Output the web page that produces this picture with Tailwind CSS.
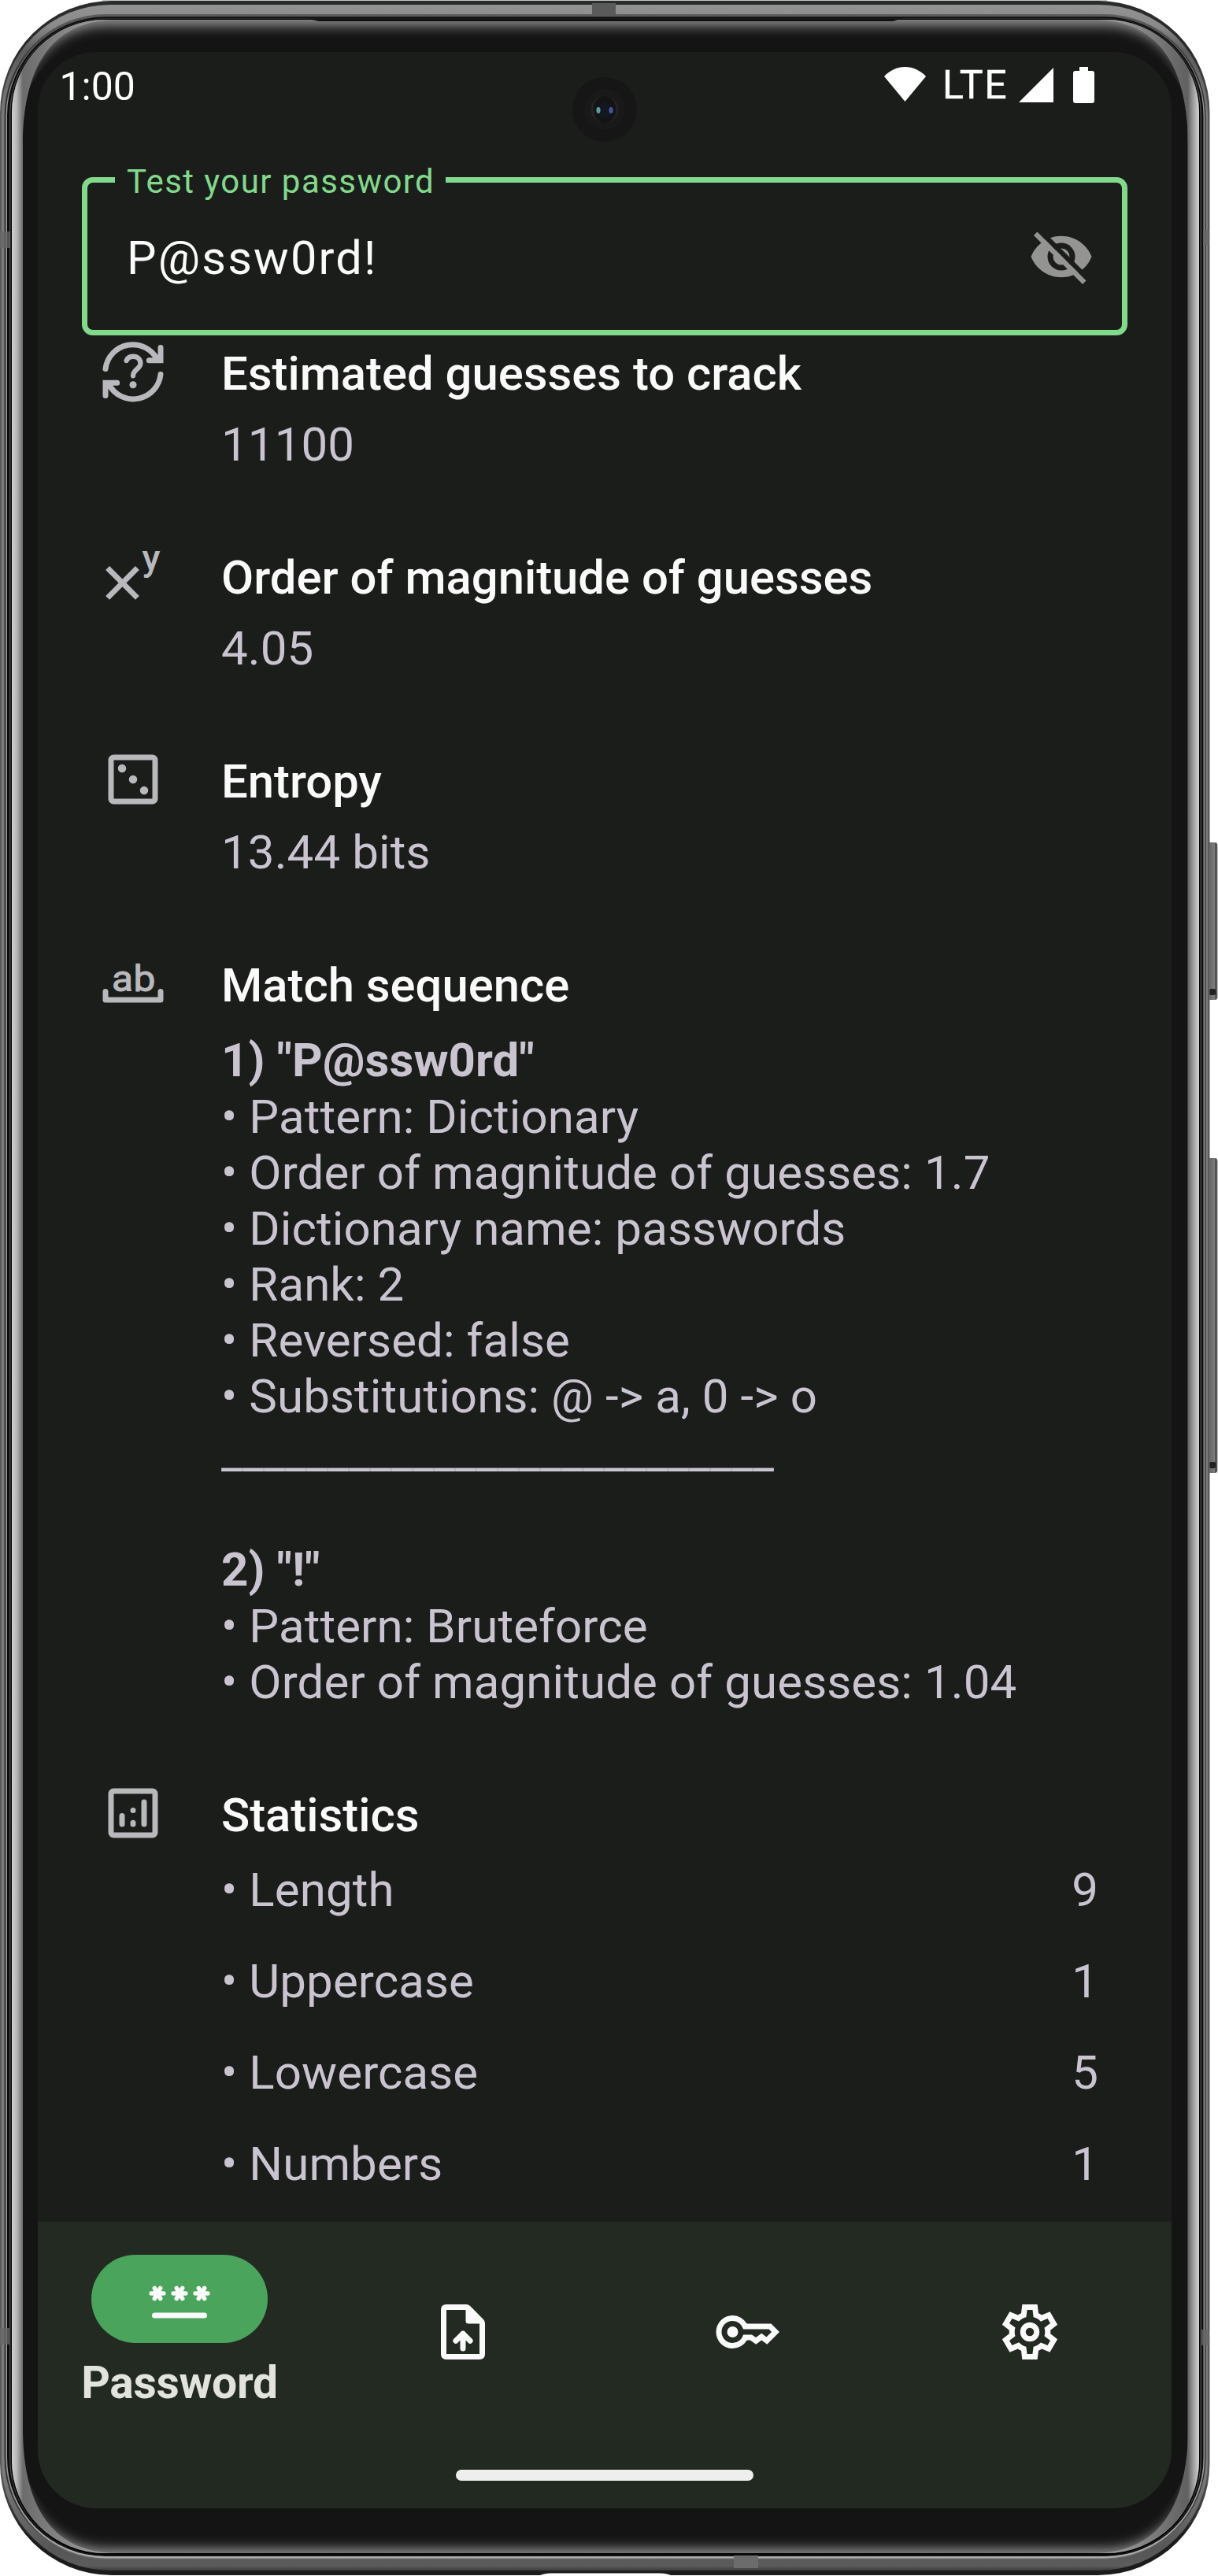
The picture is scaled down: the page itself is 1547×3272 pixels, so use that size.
<!DOCTYPE html>
<html lang="en">
<head>
<meta charset="utf-8">
<title>Password strength</title>
<script src="https://cdn.jsdelivr.net/npm/@tailwindcss/browser@4"></script>
</head>
<body class="bg-white font-[Roboto,sans-serif]">
<div class="relative h-[3272px] w-[1547px] overflow-hidden">

  <!-- Device body -->
  <svg class="absolute inset-0" width="1547" height="3272" viewBox="0 0 1547 3272" fill="none">
    <defs>
      <linearGradient id="g0" x1="0" y1="0" x2="0" y2="3272" gradientUnits="userSpaceOnUse"><stop offset="0" stop-color="#2a2c2b"/><stop offset=".02" stop-color="#2a2c2b"/><stop offset=".045" stop-color="#5a5a5a"/><stop offset=".96" stop-color="#5a5a5a"/><stop offset=".985" stop-color="#1c1c1c"/><stop offset="1" stop-color="#1c1c1c"/></linearGradient>
      <linearGradient id="g1" x1="0" y1="0" x2="0" y2="3272" gradientUnits="userSpaceOnUse"><stop offset="0" stop-color="#949494"/><stop offset=".01" stop-color="#8a8a8a"/><stop offset=".02" stop-color="#5c5c5c"/><stop offset=".045" stop-color="#7c7c7c"/><stop offset=".96" stop-color="#7c7c7c"/><stop offset=".99" stop-color="#565656"/><stop offset=".996" stop-color="#5c5c5c"/><stop offset=".999" stop-color="#2a2a2a"/></linearGradient>
      <linearGradient id="g2" x1="0" y1="0" x2="0" y2="3272" gradientUnits="userSpaceOnUse"><stop offset="0" stop-color="#666"/><stop offset=".03" stop-color="#333"/><stop offset=".97" stop-color="#333"/><stop offset="1" stop-color="#777"/></linearGradient>
      <linearGradient id="g3" x1="0" y1="0" x2="0" y2="3272" gradientUnits="userSpaceOnUse"><stop offset="0" stop-color="#333"/><stop offset=".01" stop-color="#555"/><stop offset=".04" stop-color="#9a9a9a"/><stop offset=".97" stop-color="#9a9a9a"/><stop offset="1" stop-color="#b4b4b4"/></linearGradient>
      <linearGradient id="g5" x1="0" y1="0" x2="0" y2="3272" gradientUnits="userSpaceOnUse"><stop offset="0" stop-color="#1a1a1a"/><stop offset=".04" stop-color="#4a4a4a"/><stop offset=".96" stop-color="#4a4a4a"/><stop offset="1" stop-color="#222"/></linearGradient>
      <linearGradient id="rim" x1="15" y1="0" x2="1523" y2="0" gradientUnits="userSpaceOnUse"><stop offset="0" stop-color="#d0d0d0"/><stop offset=".004" stop-color="#b8b8b8"/><stop offset=".0093" stop-color="#6c6c6c"/><stop offset=".07" stop-color="#9a9a9a"/><stop offset=".93" stop-color="#9a9a9a"/><stop offset=".9903" stop-color="#606060"/><stop offset=".996" stop-color="#a8a8a8"/><stop offset="1" stop-color="#d4d4d4"/></linearGradient>
      <linearGradient id="btn" x1="1533" y1="0" x2="1547" y2="0" gradientUnits="userSpaceOnUse"><stop offset="0" stop-color="#4a4a4a"/><stop offset=".15" stop-color="#a0a0a0"/><stop offset=".3" stop-color="#6a6a6a"/><stop offset=".7" stop-color="#7c7c7c"/><stop offset=".82" stop-color="#3a3a3a"/><stop offset="1" stop-color="#a0a0a0"/></linearGradient>
      <clipPath id="glass"><rect x="15" y="25" width="1508" height="3218" rx="118"/></clipPath>
      <filter id="soft" x="-10%" y="-10%" width="120%" height="120%"><feGaussianBlur stdDeviation="8"/></filter>
    </defs>
    <rect x="1533" y="1070" width="13.5" height="200" rx="4" fill="url(#btn)"/>
    <rect x="1536" y="1256" width="8" height="8" rx="2" fill="#222"/>
    <rect x="1533" y="1471" width="13.5" height="400" rx="4" fill="url(#btn)"/>
    <rect x="1536" y="1857" width="8" height="8" rx="2" fill="#222"/>
    <rect x="130" y="0" width="1276" height="4" fill="#c4c8c5"/>
    <rect x="0" y="1" width="1536.500" height="3270" rx="142" fill="url(#g0)"/>
    <rect x="2" y="6" width="1532" height="3259" rx="138" fill="url(#g1)"/>
    <rect x="5.500" y="18" width="1526" height="3233" rx="129" fill="url(#g2)"/>
    <rect x="7.500" y="20.500" width="1522.500" height="3229" rx="127" fill="url(#g3)"/>
    <rect x="9" y="21.500" width="1519.500" height="3225.500" rx="125" fill="#0d0d0d"/>
    <rect x="12" y="23" width="1514" height="3223" rx="122" fill="url(#g5)"/>
    <rect x="13.500" y="24" width="1511" height="3221.500" rx="120" fill="#030303"/>
    <rect x="15" y="25" width="1508" height="3218" rx="118" fill="#141414"/>
    <g clip-path="url(#glass)">
      <rect x="16" y="22" width="1506" height="3226" rx="118" stroke="#9a9a9a" stroke-width="20" filter="url(#soft)"/>
      <rect x="29" y="60" width="1479" height="3145" rx="90" fill="#141414"/>
      <path fill="url(#rim)" fill-rule="evenodd" d="M15 25H1523V3243H15ZM29 185V3083C29 3175 60 3243 150 3243H1388C1478 3243 1509 3175 1509 3083V185C1509 93 1478 25 1388 25H150C60 25 29 93 29 185Z"/>
    </g>
    <path d="M390 23.500H1146L1134 27H405Z" fill="#111"/>
    <rect x="752" y="4" width="30" height="17" fill="#5a5a5a"/>
    <rect x="932" y="3246" width="31" height="16" fill="#6c6c6c"/>
    <rect x="0" y="294" width="13" height="21" fill="#666" opacity=".8"/>
    <rect x="0" y="2957" width="12" height="21" fill="#666" opacity=".8"/>
    <rect x="1528" y="292" width="8" height="20" fill="#666" opacity=".8"/>
    <rect x="1526" y="2959" width="10" height="20" fill="#666" opacity=".8"/>
    <path d="M684 3272Q690 3268.500 700 3268.500H838Q848 3268.500 854 3272Z" fill="#fff"/>
  </svg>

  <!-- Screen -->
  <div class="relative ml-[48px] mt-[66px] flex h-[3120px] w-[1440px] flex-col overflow-hidden rounded-[74px] bg-[#1b1d1a]">

    <!-- Front camera -->
    <svg class="absolute left-[679px] top-[32px]" width="82" height="82" viewBox="0 0 82 82">
      <circle cx="41" cy="41" r="41" fill="#161616"/>
      <circle cx="41" cy="41" r="26" fill="#191919"/>
      <circle cx="41" cy="41" r="17.500" fill="#242424"/>
      <ellipse cx="41" cy="41" rx="14.500" ry="17.500" fill="#141414"/>
      <circle cx="41" cy="42" r="10" fill="#131720"/>
      <ellipse cx="33" cy="42" rx="2.600" ry="4" fill="#5f9c9c"/>
      <ellipse cx="49" cy="42" rx="2.600" ry="4" fill="#4656a4"/>
    </svg>

    <!-- Status bar -->
    <div class="flex h-[159px] shrink-0 items-start justify-between pl-[27.500px] pr-[98px] text-white">
      <div class="mt-[14px] text-[50px] leading-[60px]">1:00</div>
      <div class="flex items-start">
        <svg class="mt-[19px]" width="53" height="44" viewBox="0 0 53 44"><path d="M26.500 0C16.500 0 7 4.500 0 12L26.500 44L53 12C46 4.500 36.500 0 26.500 0Z" fill="#fff"/></svg>
        <div class="ml-[21px] mt-[12px] w-[97px] text-[50px] leading-[60px] tracking-[1.600px] [-webkit-text-stroke:.5px_white]">LTE</div>
        <svg class="mt-[20px]" width="44" height="44" viewBox="0 0 44 44"><path d="M44 0V44H0Z" fill="#fff"/></svg>
        <svg class="ml-[25px] mt-[19px]" width="27" height="46" viewBox="0 0 27 46"><path d="M8 0H19V5H24Q27 5 27 8V43Q27 46 24 46H3Q0 46 0 43V8Q0 5 3 5H8Z" fill="#fff"/></svg>
      </div>
    </div>

    <!-- Password field -->
    <div class="relative mx-[56px] flex h-[201px] shrink-0 items-center justify-between rounded-[14px] border-[7px] border-[#82d98c] pl-[50px] pr-[35px]">
      <div class="absolute left-[35px] top-[-26px] w-[420px] bg-[#1b1d1a] pl-[15px] text-[42px] leading-[50px] tracking-[1.440px] whitespace-nowrap text-[#82d98c]">Test your password</div>
      <div class="mt-[5px] text-[59.500px] leading-[70px] tracking-[2.170px] text-[#fafafa]">P@ssw0rd!</div>
      <svg width="84" height="84" viewBox="0 0 24 24" fill="#949492">
        <defs><mask id="eye"><rect width="24" height="24" fill="#fff"/><circle cx="12" cy="12" r="5" fill="#000"/><circle cx="12" cy="12" r="3" fill="#fff"/><path d="M2.460 2.190L22 21.730L24.540 21.730L2.810 0Z" fill="#000"/></mask></defs>
        <path mask="url(#eye)" d="M12 4.500C7 4.500 2.730 7.610 1 12c1.730 4.390 6 7.500 11 7.500s9.270-3.110 11-7.500c-1.730-4.390-6-7.500-11-7.500z"/>
        <path d="M3.270 3L2 4.270L19.730 22L21 20.730Z"/>
      </svg>
    </div>

    <!-- Results -->
    <main class="mt-[4px] flex min-h-0 flex-1 flex-col gap-[89px] overflow-hidden pl-[79px] pr-[93px] text-[60px] leading-[71px] tracking-[.1px] text-[#cac4d0]">
      <section class="flex shrink-0 gap-[70px]">
        <svg class="size-[84px] shrink-0" viewBox="0 0 24 24" fill="none" stroke="#b9b8bd" stroke-width="2" stroke-linecap="round">
          <path d="M2 11A10 10 0 0 1 20.800 7.600M22 3.300V7.900H17.800M22 13A10 10 0 0 1 3.300 16.800M2 20.700V16.100H6.200"/>
          <path stroke-width="1.800" d="M9.600 8C10 7.100 10.900 6.500 12 6.500C13.500 6.500 14.700 7.500 14.700 9C14.700 11 12 11.300 12 13.500"/>
          <circle cx="12" cy="16.800" r="1.300" fill="#b9b8bd" stroke="none"/>
        </svg>
        <div class="flex-1 pt-[10px]">
          <h2 class="mb-[19px] text-[59.800px] font-medium leading-[70px] tracking-normal text-[#fafafa]">Estimated guesses to crack</h2>
          <p>11100</p>
        </div>
      </section>

      <section class="flex shrink-0 gap-[70px]">
        <svg class="size-[84px] shrink-0 overflow-visible" viewBox="0 0 24 24" fill="none" stroke="#b9b8bd" stroke-width="2">
          <path d="M2.750 9.300L13.550 20.100M13.550 9.300L2.750 20.100"/>
          <text x="15.300" y="10.200" font-family="Roboto" font-weight="500" font-size="13.400" fill="#b9b8bd" stroke="none">y</text>
        </svg>
        <div class="flex-1 pt-[10px]">
          <h2 class="mb-[19px] text-[59.800px] font-medium leading-[70px] tracking-normal text-[#fafafa]">Order of magnitude of guesses</h2>
          <p>4.05</p>
        </div>
      </section>

      <section class="flex shrink-0 gap-[70px]">
        <svg class="size-[84px] shrink-0" viewBox="0 0 24 24" fill="#b9b8bd">
          <rect x="4" y="4" width="16" height="16" rx="1" fill="none" stroke="#b9b8bd" stroke-width="2"/>
          <circle cx="8" cy="8" r="1.500"/><circle cx="12" cy="12" r="1.500"/><circle cx="16" cy="16" r="1.500"/>
        </svg>
        <div class="flex-1 pt-[10px]">
          <h2 class="mb-[19px] text-[59.800px] font-medium leading-[70px] tracking-normal text-[#fafafa]">Entropy</h2>
          <p>13.44 bits</p>
        </div>
      </section>

      <section class="flex shrink-0 gap-[70px]">
        <svg class="size-[84px] shrink-0 overflow-visible" viewBox="0 0 24 24" fill="none" stroke="#b9b8bd" stroke-width="2" stroke-linecap="round" stroke-linejoin="round">
          <path d="M2 15V18H22V15"/>
          <text x="4.300" y="14.900" textLength="15.900" lengthAdjust="spacingAndGlyphs" font-family="Roboto" font-size="13.200" fill="#b9b8bd" stroke="#b9b8bd" stroke-width=".3">ab</text>
        </svg>
        <div class="flex-1 pt-[10px]">
          <h2 class="mb-[24px] text-[59.800px] font-medium leading-[70px] tracking-normal text-[#fafafa]">Match sequence</h2>
          <p class="font-bold leading-[72px]">1) "P@ssw0rd"</p>
          <p>• Pattern: Dictionary</p>
          <p>• Order of magnitude of guesses: 1.7</p>
          <p>• Dictionary name: passwords</p>
          <p>• Rank: 2</p>
          <p>• Reversed: false</p>
          <p>• Substitutions: @ -&gt; a, 0 -&gt; o</p>
          <p class="mb-[78px] text-[59.850px] tracking-normal">__________________________</p>
          <p class="font-bold leading-[72px]">2) "!"</p>
          <p>• Pattern: Bruteforce</p>
          <p>• Order of magnitude of guesses: 1.04</p>
        </div>
      </section>

      <section class="flex shrink-0 gap-[70px]">
        <svg class="size-[84px] shrink-0" viewBox="0 0 24 24" fill="none" stroke="#b9b8bd" stroke-width="2" stroke-linecap="round">
          <rect x="4" y="4" width="16" height="16" rx="1"/>
          <path d="M8 13V16M12 15.500V16M16 8V16"/>
          <circle cx="12" cy="11" r="1" fill="#b9b8bd" stroke="none"/>
        </svg>
        <div class="flex-1 pt-[10px]">
          <h2 class="mb-[24px] text-[59.800px] font-medium leading-[70px] tracking-normal text-[#fafafa]">Statistics</h2>
          <div class="flex h-[116px] justify-between"><span>• Length</span><span>9</span></div>
          <div class="flex h-[116px] justify-between"><span>• Uppercase</span><span>1</span></div>
          <div class="flex h-[116px] justify-between"><span>• Lowercase</span><span>5</span></div>
          <div class="flex h-[116px] justify-between"><span>• Numbers</span><span>1</span></div>
        </div>
      </section>
    </main>

    <!-- Bottom navigation -->
    <nav class="relative grid h-[280px] shrink-0 grid-cols-4 bg-[#222a22] text-[#fafafa]">
      <div class="flex flex-col items-center pt-[42px]">
        <div class="flex h-[112px] w-[224px] items-center justify-center rounded-full bg-[#4aa45c]">
          <svg class="size-[84px]" viewBox="0 0 24 24" fill="none" stroke="currentColor" stroke-width="1.600" stroke-linecap="round">
            <path stroke-width="2" d="M3 18H21"/>
            <path d="M1.750 10H6.250M2.950 8.100L5.050 11.900M5.050 8.100L2.950 11.900M9.750 10H14.250M10.950 8.100L13.050 11.900M13.050 8.100L10.950 11.900M17.750 10H22.250M18.950 8.100L21.050 11.900M21.050 8.100L18.950 11.900"/>
          </svg>
        </div>
        <div class="mt-[17px] text-[57px] font-bold leading-[67px] tracking-[-.3px] text-[#e2e3dd]">Password</div>
      </div>
      <div class="flex justify-center pt-[98px]">
        <svg class="size-[84px]" viewBox="0 0 24 24" fill="none" stroke="currentColor" stroke-width="2">
          <path fill="currentColor" stroke="none" fill-rule="evenodd" d="M6 2H13.200Q14 2 14.600 2.600L19.400 7.400Q20 8 20 8.800V20Q20 22 18 22H6Q4 22 4 20V4Q4 2 6 2ZM6 4V20H18V9H14Q13 9 13 8V4Z"/>
          <path stroke-linecap="round" stroke-linejoin="round" d="M12 12.600V18M9.400 15.200L12 12.600L14.600 15.200"/>
        </svg>
      </div>
      <div class="flex justify-center pt-[98px]">
        <svg class="size-[84px]" viewBox="0 -960 960 960" fill="currentColor"><path d="M280-400q-33 0-56.500-23.500T200-480q0-33 23.500-56.500T280-560q33 0 56.500 23.500T360-480q0 33-23.500 56.500T280-400Zm0 160q-100 0-170-70T40-480q0-100 70-170t170-70q67 0 121.500 33t86.500 87h352l120 120-180 180-80-60-80 60-85-60h-47q-32 54-86.500 87T280-240Zm0-80q56 0 98.500-34t56.500-86h125l58 41 82-61 71 55 75-75-40-40H435q-14-52-56.500-86T280-640q-66 0-113 47t-47 113q0 66 47 113t113 47Z"/></svg>
      </div>
      <div class="flex justify-center pt-[98px]">
        <svg class="size-[84px]" viewBox="0 -960 960 960" fill="currentColor"><path d="m370-80-16-128q-13-5-24.500-12T307-235l-119 50L78-375l103-78q-1-7-1-13.500v-27q0-6.500 1-13.500L78-585l110-190 119 50q11-8 23-15t24-12l16-128h220l16 128q13 5 24.500 12t22.500 15l119-50 110 190-103 78q1 7 1 13.500v27q0 6.500-2 13.500l103 78-110 190-118-50q-11 8-23 15t-24 12L590-80H370Zm70-80h79l14-106q31-8 57.500-23.500T639-327l99 41 39-68-86-65q5-14 7-29.500t2-31.500q0-16-2-31.500t-7-29.500l86-65-39-68-99 42q-22-23-48.500-38.500T533-694l-13-106h-79l-14 106q-31 8-57.500 23.500T321-633l-99-41-39 68 86 64q-5 15-7 30t-2 32q0 16 2 31t7 30l-86 65 39 68 99-42q22 23 48.500 38.500T427-266l13 106Z"/><circle cx="480" cy="-480" r="100" fill="none" stroke="currentColor" stroke-width="80"/></svg>
      </div>
    </nav>
    <div class="flex h-[84px] shrink-0 justify-center bg-[#212921] pt-[35px]">
      <div class="h-[14px] w-[378px] rounded-full bg-[#efeeef]"></div>
    </div>
  </div>
</div>
</body>
</html>
